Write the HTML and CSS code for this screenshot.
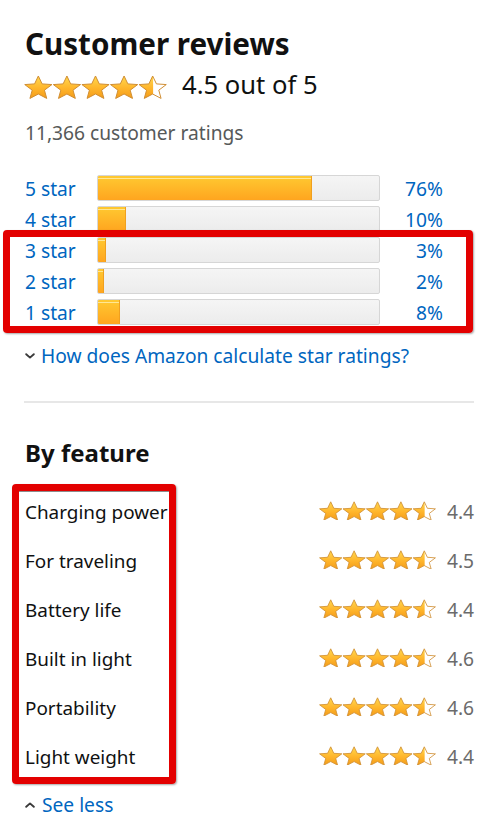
FILE: index.html
```html
<!DOCTYPE html>
<html lang="en">
<head>
<meta charset="utf-8">
<title>Customer reviews</title>
<link rel="stylesheet" href="styles.css">
</head>
<body>
<svg class="svg-defs" aria-hidden="true">
  <defs>
    <linearGradient id="star-grad" x1="0" y1="0" x2="0" y2="1">
      <stop offset="0" stop-color="#ffd84f"/>
      <stop offset="0.55" stop-color="#ffb52b"/>
      <stop offset="1" stop-color="#f39c1a"/>
    </linearGradient>
    <clipPath id="half-clip"><rect x="0" y="0" width="13.4" height="22"/></clipPath>
    <path id="star-shape" d="M13 0.9 L16.44 8.1 L25.36 8.7 L18.56 13.8 L20.64 21.3 L13 17.3 L5.36 21.3 L7.44 13.8 L0.64 8.7 L9.56 8.1 Z"/>
    <g id="star-full">
      <use href="#star-shape" fill="url(#star-grad)" stroke="#cf8d32" stroke-width="0.9" stroke-linejoin="round"/>
    </g>
    <g id="star-half">
      <use href="#star-shape" fill="#ffffff"/>
      <use href="#star-shape" fill="url(#star-grad)" clip-path="url(#half-clip)"/>
      <use href="#star-shape" fill="none" stroke="#cf8d32" stroke-width="0.9" stroke-linejoin="round"/>
    </g>
    <g id="stars-45">
      <use href="#star-full" x="0"/>
      <use href="#star-full" x="26"/>
      <use href="#star-full" x="52"/>
      <use href="#star-full" x="78"/>
      <use href="#star-half" x="104"/>
    </g>
  </defs>
</svg>

<main class="page">
  <h2 class="title">Customer reviews</h2>

  <div class="overall">
    <svg class="stars stars-lg" viewBox="0 0 130 22"><use href="#stars-45"/></svg>
    <span class="overall-text">4.5 out of 5</span>
  </div>

  <div class="total">11,366 customer ratings</div>

  <div class="histogram">
    <div class="hist-row">
      <a class="hist-label">5 star</a>
      <div class="bar"><div class="bar-fill" style="width:76%"></div></div>
      <a class="hist-pct">76%</a>
    </div>
    <div class="hist-row">
      <a class="hist-label">4 star</a>
      <div class="bar"><div class="bar-fill" style="width:10%"></div></div>
      <a class="hist-pct">10%</a>
    </div>
    <div class="hist-row">
      <a class="hist-label">3 star</a>
      <div class="bar"><div class="bar-fill" style="width:3%"></div></div>
      <a class="hist-pct">3%</a>
    </div>
    <div class="hist-row">
      <a class="hist-label">2 star</a>
      <div class="bar"><div class="bar-fill" style="width:2%"></div></div>
      <a class="hist-pct">2%</a>
    </div>
    <div class="hist-row">
      <a class="hist-label">1 star</a>
      <div class="bar"><div class="bar-fill" style="width:8%"></div></div>
      <a class="hist-pct">8%</a>
    </div>
    <div class="mark mark-hist"></div>
  </div>

  <a class="expander expander-down">
    <svg class="chev" viewBox="0 0 10 6"><path d="M1.2 1.2 L5 4.6 L8.8 1.2"/></svg>
    <span>How does Amazon calculate star ratings?</span>
  </a>

  <hr class="divider">

  <h3 class="feature-title">By feature</h3>

  <div class="features">
    <div class="feature-row">
      <span class="feature-name">Charging power</span>
      <svg class="stars stars-sm" viewBox="0 0 130 22"><use href="#stars-45"/></svg>
      <span class="feature-value">4.4</span>
    </div>
    <div class="feature-row">
      <span class="feature-name">For traveling</span>
      <svg class="stars stars-sm" viewBox="0 0 130 22"><use href="#stars-45"/></svg>
      <span class="feature-value">4.5</span>
    </div>
    <div class="feature-row">
      <span class="feature-name">Battery life</span>
      <svg class="stars stars-sm" viewBox="0 0 130 22"><use href="#stars-45"/></svg>
      <span class="feature-value">4.4</span>
    </div>
    <div class="feature-row">
      <span class="feature-name">Built in light</span>
      <svg class="stars stars-sm" viewBox="0 0 130 22"><use href="#stars-45"/></svg>
      <span class="feature-value">4.6</span>
    </div>
    <div class="feature-row">
      <span class="feature-name">Portability</span>
      <svg class="stars stars-sm" viewBox="0 0 130 22"><use href="#stars-45"/></svg>
      <span class="feature-value">4.6</span>
    </div>
    <div class="feature-row">
      <span class="feature-name">Light weight</span>
      <svg class="stars stars-sm" viewBox="0 0 130 22"><use href="#stars-45"/></svg>
      <span class="feature-value">4.4</span>
    </div>
    <div class="mark mark-feat"></div>
  </div>

  <a class="expander expander-up">
    <svg class="chev" viewBox="0 0 10 6"><path d="M1.2 4.8 L5 1.4 L8.8 4.8"/></svg>
    <span>See less</span>
  </a>
</main>
</body>
</html>
```

FILE: styles.css
```css
* { box-sizing: border-box; }

html, body {
  margin: 0;
  padding: 0;
  background: #ffffff;
}

body {
  font-family: "Noto Sans", "DejaVu Sans", sans-serif;
  font-size: 19.2px;
  color: #0f1111;
}

.svg-defs {
  display: block;
  width: 0;
  height: 0;
  overflow: hidden;
}

.page {
  padding: 26px 25px 0 25px;
  width: 499px;
}

.title {
  margin: 0;
  font-size: 29.6px;
  line-height: 36px;
  font-weight: 700;
  color: #111111;
}

.overall {
  margin-top: 7px;
  display: flex;
  align-items: flex-start;
  height: 32px;
}

.stars { display: block; flex: none; }

.stars-lg {
  width: 143px;
  height: 24.2px;
  margin-top: 6px;
  margin-left: -1px;
}

.overall-text {
  margin-left: 15px;
  font-size: 25.6px;
  line-height: 32px;
  color: #0f1111;
}

.total {
  margin-top: 20px;
  line-height: 24px;
  color: #565959;
}

/* histogram */
.histogram {
  position: relative;
  margin-top: 27px;
  width: 418px;
}

.hist-row {
  display: grid;
  grid-template-columns: 72px 283px 1fr;
  align-items: center;
  height: 31px;
}

.hist-label,
.hist-pct {
  color: #0066c0;
  line-height: 24px;
  padding-top: 2px;
}

.hist-pct { text-align: right; }

.bar {
  height: 26px;
  border: 1px solid #d6d6d6;
  border-radius: 2px;
  background: linear-gradient(to bottom, #f5f5f5, #ececec);
  overflow: hidden;
}

.bar-fill {
  height: 100%;
  background:
    linear-gradient(to bottom, transparent 2px, rgba(255,235,160,0.9) 2px, rgba(255,235,160,0.9) 3px, transparent 3px),
    linear-gradient(to bottom, #ffc931, #ffa51f);
  border-right: 1px solid #f0a01e;
}

.mark {
  position: absolute;
  border: 7px solid #e30000;
  border-radius: 4px;
  box-shadow: 1px 1px 2px rgba(0, 0, 0, 0.35);
  pointer-events: none;
}

.mark-hist {
  left: -22px;
  top: 58px;
  width: 470px;
  height: 103px;
}

.expander {
  display: flex;
  align-items: center;
  color: #0066c0;
  line-height: 24px;
}

.expander-down { margin-top: 17px; }

.chev {
  width: 10px;
  height: 6px;
  margin-right: 6px;
  flex: none;
}

.chev path {
  fill: none;
  stroke: #3a3a3a;
  stroke-width: 1.9;
  stroke-linecap: round;
  stroke-linejoin: round;
}

.divider {
  margin: 33px 0 0 -1px;
  width: 450px;
  border: 0;
  border-top: 2px solid #e7e7e7;
  height: 0;
}

.feature-title {
  margin: 35px 0 0 0;
  font-size: 24px;
  line-height: 30px;
  font-weight: 700;
  color: #111111;
}

.features {
  position: relative;
  margin-top: 18px;
}

.feature-row {
  display: grid;
  grid-template-columns: 1fr auto 39px;
  align-items: center;
  height: 49px;
}

.feature-name {
  font-size: 18.9px;
  line-height: 24px;
  padding-top: 2px;
  color: #0f1111;
}

.stars-sm {
  width: 117px;
  height: 19.8px;
  margin-right: -1px;
}

.feature-value {
  text-align: right;
  line-height: 24px;
  padding-top: 2px;
  color: #6b6b6b;
}

.mark-feat {
  left: -13px;
  top: -2px;
  width: 164px;
  height: 300px;
  box-shadow: 1px 1px 2px rgba(0, 0, 0, 0.35), inset 0 1px 0 #8c8c8c;
}

.expander-up { margin-top: 13px; }

.expander-up .chev { margin-right: 7px; }
```
